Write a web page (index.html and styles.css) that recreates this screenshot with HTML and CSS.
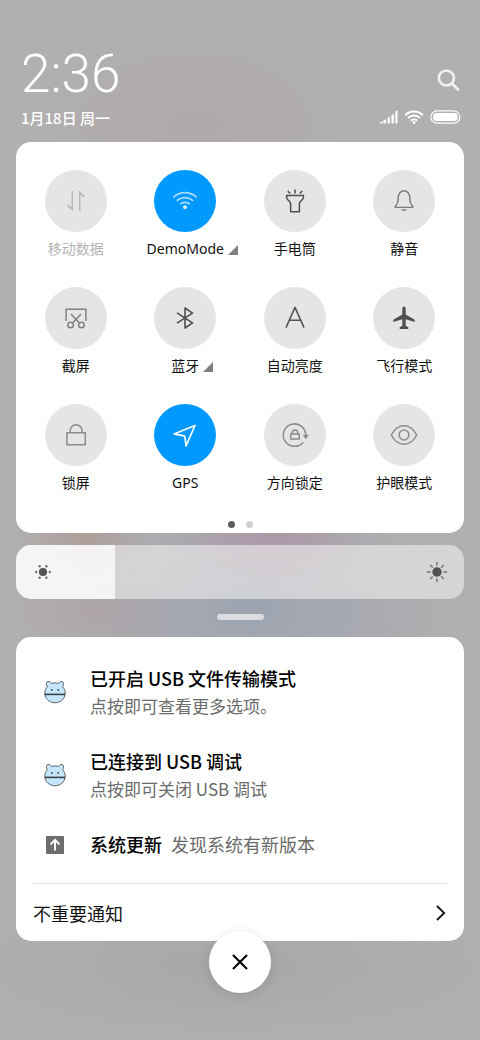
FILE: index.html
```html
<!DOCTYPE html>
<html lang="zh-CN">
<head>
<meta charset="utf-8">
<meta name="viewport" content="width=device-width, initial-scale=1">
<title>控制中心</title>
<link rel="stylesheet" href="styles.css">
</head>
<body>
<main class="shade">
  <header class="header">
    <div class="clock">
      <time class="time">2:36</time>
      <div class="date">1月18日 周一</div>
    </div>
    <div class="header-side">
      <button class="search" aria-label="搜索">
        <svg width="24" height="24" viewBox="0 0 24 24" fill="none" stroke="#f3f2f2" stroke-width="2.6" stroke-linecap="round"><circle cx="9.400" cy="10" r="7.500"/><path d="M15 15.500 21 21.500"/></svg>
      </button>
      <div class="status">
        <svg width="19" height="14" viewBox="0 0 19 14" fill="#fff"><path d="M0 13.5 3.4 11v2.5zM4.400 10.200l2.400-.9v4.200H4.400zM8.500 7.800l2.400-.9v6.600H8.500zM12.500 4.900l2.400-.9v9.500h-2.400zM16.300 1.300l2.200-.9v13.100h-2.200z"/></svg>
        <svg width="20" height="14" viewBox="0 0 20 14" fill="none" stroke="#fff" stroke-width="2"><path d="M1.200 5.200a12.400 12.400 0 0 1 17.600 0M4 8.100a8.500 8.500 0 0 1 12 0M6.800 10.800a4.600 4.600 0 0 1 6.400 0"/><circle cx="10" cy="12.400" r="1.500" fill="#fff" stroke="none"/></svg>
        <svg width="31" height="14" viewBox="0 0 31 14"><rect x=".8" y=".8" width="29" height="12.400" rx="6.200" fill="none" stroke="#fff" stroke-width="1.200"/><rect x="3" y="3" width="24.600" height="8" rx="3.400" fill="#fff"/></svg>
      </div>
    </div>
  </header>

  <section class="card toggles" aria-label="快捷开关">
    <div class="grid">
      <button class="tile disabled">
        <span class="disc"><svg width="28" height="28" viewBox="0 0 28 28" fill="#b9b9b9"><path d="M9.600 4h1.500v20.200L5 18.800l.9-1.200 3.700 2.600zM17 24.200h1.500V7.800l3.600 2.700.9-1.200L17 3.800z"/></svg></span>
        <span class="label">移动数据</span>
      </button>
      <button class="tile on">
        <span class="disc"><svg width="28" height="28" viewBox="0 0 28 28" fill="none" stroke="#a6daff" stroke-width="1.700"><path d="M2.400 10.300a16.500 16.500 0 0 1 23.200 0M5.800 13.900a11.700 11.700 0 0 1 16.400 0M9.200 17.200a7 7 0 0 1 9.600 0"/><circle cx="14" cy="20.200" r="2" fill="#d5eeff" stroke="none"/></svg></span>
        <span class="label">DemoMode<svg class="more" width="10" height="10" viewBox="0 0 10 10"><path d="M10 0v10H0z"/></svg></span>
      </button>
      <button class="tile">
        <span class="disc"><svg width="28" height="28" viewBox="0 0 28 28" fill="none" stroke="#4e4e4e" stroke-width="1.500" stroke-linejoin="round"><path d="M5.600 8.600h16.800v1.900c0 3-4 3.100-4 5.900v8.400H9.600v-8.400c0-2.800-4-2.900-4-5.900zM14 2.500v4M6.800 3.900l2.400 2.500M21.200 3.900l-2.400 2.500"/></svg></span>
        <span class="label">手电筒</span>
      </button>
      <button class="tile">
        <span class="disc"><svg width="28" height="28" viewBox="0 0 28 28" fill="none" stroke="#7d7d7d" stroke-width="1.400" stroke-linejoin="round"><path d="M8.200 10.500a5.800 6.800 0 0 1 11.600 0c0 5 .5 6.700 3 8.900v1H5.200v-1c2.500-2.200 3-3.900 3-8.900z"/><path d="M11 22.300h6c-1.200 2-4.800 2-6 0z" fill="#7d7d7d" stroke="none"/></svg></span>
        <span class="label">静音</span>
      </button>

      <button class="tile">
        <span class="disc"><svg width="28" height="28" viewBox="0 0 28 28" fill="none" stroke="#828282" stroke-width="1.500"><path d="M4.100 17V5.200h19.800V17M9 10l8.200 8.800M19 10l-8.200 8.800"/><circle cx="8.600" cy="21" r="2.800"/><circle cx="19.400" cy="21" r="2.800"/></svg></span>
        <span class="label">截屏</span>
      </button>
      <button class="tile">
        <span class="disc"><svg width="28" height="28" viewBox="0 0 28 28" fill="none" stroke="#4e4e4e" stroke-width="1.600" stroke-linejoin="round"><path d="M6 8.800l15.500 10L14 24V4l7.500 5.200L6 19.200"/></svg></span>
        <span class="label">蓝牙<svg class="more" width="10" height="10" viewBox="0 0 10 10"><path d="M10 0v10H0z"/></svg></span>
      </button>
      <button class="tile">
        <span class="disc"><svg width="28" height="28" viewBox="0 0 28 28" fill="none" stroke="#555" stroke-width="1.600" stroke-linejoin="round"><path d="M5 23.600 14 3.400l9 20.200M8.400 16.200h11.200"/></svg></span>
        <span class="label">自动亮度</span>
      </button>
      <button class="tile">
        <span class="disc"><svg width="28" height="28" viewBox="0 0 28 28" fill="#505050"><path d="M14 2.600c1.100 0 1.700 1 1.700 2.200v5.800l9 5.200v2.200l-9-2.700v6.400l2.600 1.600v1.600H9.700v-1.600l2.600-1.600v-6.400l-9 2.700v-2.200l9-5.200V4.800c0-1.200.6-2.200 1.700-2.200z"/></svg></span>
        <span class="label">飞行模式</span>
      </button>

      <button class="tile">
        <span class="disc"><svg width="28" height="28" viewBox="0 0 28 28" fill="none" stroke="#8c8c8c" stroke-width="1.500"><path d="M4.900 11.700h18.400v12H4.900zM8.200 11.700v-2a5.900 6 0 0 1 11.800 0v2"/></svg></span>
        <span class="label">锁屏</span>
      </button>
      <button class="tile on">
        <span class="disc"><svg width="28" height="28" viewBox="0 0 28 28" fill="none" stroke="#fff" stroke-width="1.600" stroke-linejoin="round"><path d="M24 4.400 15 24.900l-1.200-9.800L3 12.900z"/></svg></span>
        <span class="label">GPS</span>
      </button>
      <button class="tile">
        <span class="disc"><svg width="28" height="28" viewBox="0 0 28 28" fill="none" stroke="#8c8c8c" stroke-width="1.500"><path d="M22.200 21.200a11.200 11.200 0 1 1 2.500-7.500"/><path d="M21.800 13.800h6L24.800 18.600z" fill="#8c8c8c" stroke="none"/><path d="M9.800 12.900h8.400v5.200H9.800zM11.400 12.900v-1.200a2.600 2.600 0 0 1 5.200 0v1.200"/></svg></span>
        <span class="label">方向锁定</span>
      </button>
      <button class="tile">
        <span class="disc"><svg width="28" height="28" viewBox="0 0 28 28" fill="none" stroke="#8c8c8c" stroke-width="1.500" stroke-linejoin="round"><path d="M1.300 14C4.400 7.800 9 4.800 14 4.800s9.600 3 12.700 9.200C23.600 20.200 19 23.200 14 23.200S4.400 20.200 1.300 14z"/><circle cx="14" cy="14" r="4.900"/></svg></span>
        <span class="label">护眼模式</span>
      </button>
    </div>
    <div class="pager"><span class="dot current"></span><span class="dot"></span></div>
  </section>

  <div class="brightness">
    <input class="range" type="range" min="0" max="100" value="22" aria-label="亮度">
    <svg class="sun low" width="22" height="22" viewBox="0 0 22 22" fill="#555"><circle cx="11" cy="11" r="4.100"/><g fill="#777"><circle cx="4.200" cy="11" r="1.300"/><circle cx="17.800" cy="11" r="1.300"/><circle cx="7.600" cy="5.200" r="1.300"/><circle cx="14.400" cy="5.200" r="1.300"/><circle cx="7.600" cy="16.800" r="1.300"/><circle cx="14.400" cy="16.800" r="1.300"/></g></svg>
    <svg class="sun high" width="22" height="22" viewBox="0 0 22 22"><circle cx="11" cy="11" r="4.700" fill="#505050"/><path d="M11 1.400v2.600M11 18v2.600M1.400 11h2.600M18 11h2.600M4.600 4.600l1.700 1.700M15.700 15.700l1.700 1.700M17.400 4.600l-1.700 1.700M6.300 15.700l-1.700 1.700" stroke="#707070" stroke-width="1.400" stroke-linecap="round"/></svg>
  </div>
  <div class="handle"></div>

  <section class="card notices" aria-label="通知">
    <article class="notice">
      <svg class="notice-icon" width="24" height="24" viewBox="0 0 24 24"><path d="M4.400 6.800C2.900 4.600 3.200 1.800 5 1.500c1.700-.2 2.700.7 3.300 2a11 11 0 0 1 7.400 0c.6-1.300 1.600-2.200 3.300-2 1.800.3 2.100 3.100.6 5.300 1.700 1.700 2.600 3.800 2.600 6.200 0 5.600-4.500 9.800-10.200 9.800S1.800 18.600 1.800 13c0-2.400.9-4.500 2.600-6.200z" fill="#c5e6fb" stroke="#5e666c" stroke-width="1"/><path d="M1.800 14.400h20.400" stroke="#3c4348" stroke-width="1.600"/><circle cx="8.800" cy="10" r="1.100" fill="#555d63"/><circle cx="15.200" cy="10" r="1.100" fill="#555d63"/></svg>
      <div class="notice-body"><h2 class="title">已开启 USB 文件传输模式</h2><p class="text">点按即可查看更多选项。</p></div>
    </article>
    <article class="notice">
      <svg class="notice-icon" width="24" height="24" viewBox="0 0 24 24"><path d="M4.400 6.800C2.900 4.600 3.200 1.800 5 1.500c1.700-.2 2.700.7 3.300 2a11 11 0 0 1 7.400 0c.6-1.300 1.600-2.200 3.300-2 1.800.3 2.100 3.100.6 5.300 1.700 1.700 2.600 3.800 2.600 6.200 0 5.600-4.500 9.800-10.200 9.800S1.800 18.600 1.800 13c0-2.400.9-4.500 2.600-6.200z" fill="#c5e6fb" stroke="#5e666c" stroke-width="1"/><path d="M1.800 14.400h20.400" stroke="#3c4348" stroke-width="1.600"/><circle cx="8.800" cy="10" r="1.100" fill="#555d63"/><circle cx="15.200" cy="10" r="1.100" fill="#555d63"/></svg>
      <div class="notice-body"><h2 class="title">已连接到 USB 调试</h2><p class="text">点按即可关闭 USB 调试</p></div>
    </article>
    <article class="notice">
      <svg class="notice-icon" width="24" height="24" viewBox="0 0 24 24"><rect x="3" y="3" width="18" height="18" rx="1" fill="#6d6e70"/><path d="M12 17.500V7M7.500 11.300 12 6.800l4.500 4.500" fill="none" stroke="#fff" stroke-width="1.900"/></svg>
      <div class="notice-body single"><h2 class="title">系统更新</h2><p class="text large">发现系统有新版本</p></div>
    </article>
    <button class="unimportant">
      <span>不重要通知</span>
      <svg width="14" height="18" viewBox="0 0 14 18" fill="none" stroke="#111" stroke-width="1.800"><path d="M4 2l7.200 7L4 16"/></svg>
    </button>
  </section>

  <button class="close" aria-label="清除通知">
    <svg width="18" height="18" viewBox="0 0 18 18" fill="none" stroke="#000" stroke-width="2.100"><path d="M2 2l14 14M16 2 2 16"/></svg>
  </button>
</main>
</body>
</html>
```
FILE: styles.css
```css
* {
  box-sizing: border-box;
}

body {
  margin: 0;
  font-family: "Noto Sans CJK SC", sans-serif;
  color: #111;
}

button {
  padding: 0;
  border: 0;
  background: none;
  font: inherit;
  color: inherit;
  cursor: pointer;
}

svg {
  display: block;
  flex: none;
}

.shade {
  min-height: 100vh;
  padding: 48px 16px;
  background:
    radial-gradient(100px 60px at 270px 535px, rgba(174, 146, 163, 0.8), rgba(174, 146, 163, 0)),
    radial-gradient(70px 50px at 85px 535px, rgba(172, 154, 148, 0.8), rgba(172, 154, 148, 0)),
    radial-gradient(90px 50px at 95px 610px, rgba(174, 160, 164, 0.6), rgba(174, 160, 164, 0)),
    radial-gradient(210px 130px at 250px 610px, rgba(157, 164, 176, 1), rgba(157, 164, 176, 0)),
    radial-gradient(160px 100px at 195px 125px, rgba(174, 166, 165, 0.7), rgba(174, 166, 165, 0)),
    radial-gradient(300px 80px at 230px 965px, rgba(166, 165, 166, 0.8), rgba(166, 165, 166, 0)),
    #b1afb0;
}

.header {
  display: flex;
  justify-content: space-between;
  padding: 0 3px 0 5px;
}

.time {
  display: block;
  font: 300 53px/52px Roboto, sans-serif;
  color: #fff;
}

.date {
  margin-top: 6px;
  font: 500 15px/24px "Noto Sans CJK SC", sans-serif;
  color: #fff;
}

.header-side {
  display: flex;
  flex-direction: column;
  justify-content: space-between;
  align-items: flex-end;
  padding: 20px 0 6px;
}

.status {
  display: flex;
  gap: 6px;
}

.card {
  border-radius: 15px;
  background: #fff;
}

.toggles {
  margin-top: 12px;
  padding: 28px 5px 5px;
}

.grid {
  display: grid;
  grid-template-columns: repeat(4, 1fr);
  row-gap: 27px;
}

.tile {
  display: flex;
  flex-direction: column;
  align-items: center;
  gap: 6px;
}

.disc {
  display: grid;
  place-items: center;
  width: 62px;
  height: 62px;
  border-radius: 50%;
  background: #e5e5e5;
}

.on .disc {
  background: #0099ff;
}

.label {
  position: relative;
  font: 400 14px/22px "Noto Sans", "Noto Sans CJK SC", sans-serif;
  white-space: nowrap;
}

.disabled .label {
  color: #b4b4b4;
}

.more {
  position: absolute;
  top: 7px;
  left: 100%;
  margin-left: 4px;
  fill: #808080;
}

.pager {
  display: flex;
  justify-content: center;
  gap: 11px;
  margin-top: 27px;
}

.dot {
  width: 7px;
  height: 7px;
  border-radius: 50%;
  background: #d0d0d0;
}

.dot.current {
  background: #5c5c5c;
}

.brightness {
  position: relative;
  margin-top: 12px;
}

.range {
  display: block;
  width: 100%;
  height: 54px;
  margin: 0;
  appearance: none;
  border-radius: 15px;
  background: linear-gradient(to right, rgba(255, 255, 255, 0.88) 22%, rgba(238, 236, 236, 0.62) 22%);
}

.range::-webkit-slider-thumb {
  appearance: none;
  width: 24px;
  height: 54px;
  background: transparent;
}

.sun {
  position: absolute;
  top: 16px;
  pointer-events: none;
}

.low {
  left: 16px;
}

.high {
  right: 16px;
}

.handle {
  width: 47px;
  height: 6px;
  margin: 15px auto 17px;
  border-radius: 3px;
  background: #dcdce1;
}

.notices {
  padding: 28px 17px 0;
}

.notice {
  display: flex;
  align-items: center;
  gap: 23px;
  padding-left: 10px;
  margin-bottom: 29px;
}

.notice:last-of-type {
  margin-bottom: 25px;
}

.title {
  margin: 0;
  font-size: 18px;
  font-weight: 500;
  line-height: 27px;
  color: #000;
}

.text {
  margin: 0;
  font-size: 17px;
  line-height: 27px;
  color: #6b6b6b;
}

.single {
  display: flex;
  gap: 9px;
}

.unimportant {
  display: flex;
  justify-content: space-between;
  align-items: center;
  width: 100%;
  height: 58px;
  border-top: 1px solid #e4e4e4;
  font-size: 18px;
}

.text.large {
  font-size: 18px;
}

.close {
  position: relative;
  display: grid;
  place-items: center;
  width: 62px;
  height: 62px;
  margin: -10px auto 0;
  border-radius: 50%;
  background: #fff;
  box-shadow: 0 2px 12px rgba(0, 0, 0, 0.12);
}
```
